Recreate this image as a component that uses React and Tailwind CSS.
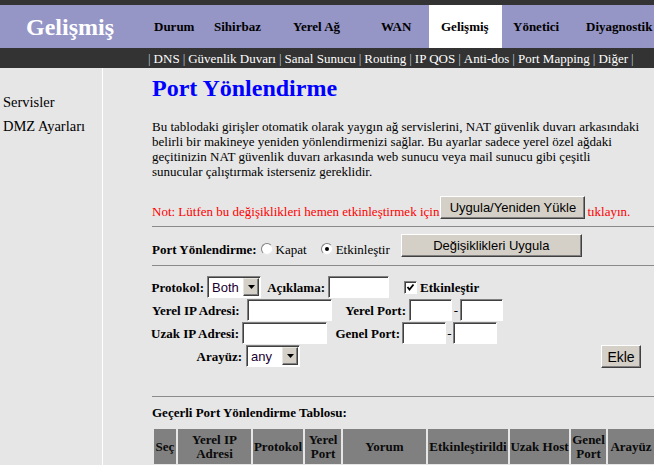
import React from 'react';

const serif = "font-['Liberation_Serif','Times_New_Roman',serif]";
const sans = "font-['Liberation_Sans',Arial,sans-serif]";

const navItems = [
  { label: 'Durum', w: 'w-[60px] pl-[12px]' },
  { label: 'Sihirbaz', w: 'w-[79px] pl-[12px]' },
  { label: 'Yerel Ağ', w: 'w-[88px] pl-[12px]' },
  { label: 'WAN', w: 'w-[60px] pl-[12px]' },
  { label: 'Gelişmiş', w: 'w-[73px] pl-[12px]', active: true },
  { label: 'Yönetici', w: 'w-[72px] pl-[11px]' },
  { label: 'Diyagnostik', w: 'w-[100px] pl-[12px]' },
];

const subItems = ['DNS', 'Güvenlik Duvarı', 'Sanal Sunucu', 'Routing', 'IP QOS', 'Anti-dos', 'Port Mapping', 'Diğer'];

const headers = [
  { t: ['Seç'], w: 'w-[22px]' },
  { t: ['Yerel IP', 'Adresi'], w: 'w-[73px]' },
  { t: ['Protokol'], w: 'w-[50px]' },
  { t: ['Yerel', 'Port'], w: 'w-[36px]' },
  { t: ['Yorum'], w: 'w-[83px]' },
  { t: ['Etkinleştirildi'], w: 'w-[80px]' },
  { t: ['Uzak Host'], w: 'w-[59px]' },
  { t: ['Genel', 'Port'], w: 'w-[35px]' },
  { t: ['Arayüz'], w: 'w-[46px]' },
];

const Btn = ({ children, className = '' }) => (
  <button
    className={`shrink-0 bg-[#d4d0c8] border border-t-white border-l-white border-b-[#404040] border-r-[#404040] shadow-[inset_-1px_-1px_0_#808080] ${sans} text-[13px] leading-none text-black ${className}`}
  >
    {children}
  </button>
);

const Field = ({ className = '' }) => (
  <input
    type="text"
    className={`shrink-0 h-[22px] bg-white border border-t-[#808080] border-l-[#808080] border-b-white border-r-white shadow-[inset_1px_1px_0_#404040] outline-none ${className}`}
  />
);

const Select = ({ value, className = '' }) => (
  <div
    className={`shrink-0 h-[22px] flex items-center bg-white border border-t-[#808080] border-l-[#808080] border-b-white border-r-white shadow-[inset_1px_1px_0_#404040] ${className}`}
  >
    <span className={`flex-1 pl-[4px] ${sans} text-[13px] leading-none text-[#1a0030]`}>{value}</span>
    <span className="mr-[1px] w-[16px] h-[18px] flex items-center justify-center bg-[#d4d0c8] border border-t-[#e8e6e0] border-l-[#e8e6e0] border-b-[#404040] border-r-[#404040] shadow-[inset_-1px_-1px_0_#808080]">
      <svg width="7" height="4" viewBox="0 0 7 4">
        <polygon points="0,0 7,0 3.5,4" fill="#000" />
      </svg>
    </span>
  </div>
);

// right-aligned label box, overflows to the left instead of wrapping
const Label = ({ children, className = '' }) => (
  <span className={`shrink-0 flex justify-end whitespace-nowrap text-[13px] leading-[15px] font-bold text-black ${className}`}>
    {children}
  </span>
);

const Radio = ({ checked }) => (
  <span className="w-[12px] h-[12px] rounded-full bg-white border border-t-[#808080] border-l-[#808080] border-b-[#e8e8e8] border-r-[#e8e8e8] flex items-center justify-center">
    {checked && <span className="w-[4px] h-[4px] rounded-full bg-black" />}
  </span>
);

const Hr = ({ className = '' }) => <div className={`h-px bg-[#8a8a8a] ${className}`} />;

export default function App() {
  return (
    <div className={`w-[654px] h-[465px] overflow-hidden bg-[#e6e6e6] ${serif}`}>
      <div className="h-[5px] bg-[#333333]" />

      <div className="h-[43px] bg-[#9595c6] flex overflow-hidden">
        <div className="w-[142px] shrink-0 flex items-center pl-[26px]">
          <span className="text-white font-bold text-[24px] leading-none">Gelişmiş</span>
        </div>
        {navItems.map((n) => (
          <div
            key={n.label}
            className={`shrink-0 flex items-center text-[13px] font-bold text-black whitespace-nowrap ${n.w} ${n.active ? 'bg-white' : ''}`}
          >
            {n.label}
          </div>
        ))}
      </div>

      <div className="h-[20px] bg-[#333333] flex items-center pl-[148px] text-[13px] leading-none text-white whitespace-nowrap overflow-hidden">
        {subItems.map((s) => (
          <React.Fragment key={s}>
            <span className="text-[#b8c4d8]">|</span>
            <span className="px-[3px]">{s}</span>
          </React.Fragment>
        ))}
        <span className="text-[#b8c4d8]">|</span>
      </div>

      <div className="flex h-[397px]">
        <aside className="w-[103px] shrink-0 border-r border-r-white pt-[22px] pl-[3px] text-[14.5px] leading-[24px] text-black">
          <div>Servisler</div>
          <div>DMZ Ayarları</div>
        </aside>

        <main className="flex-1 min-w-0 pl-[49px] text-black">
          <h1 className="mt-[6px] text-[24px] leading-[28px] font-bold text-[#0000ff]">Port Yönlendirme</h1>

          <p className="mt-[17px] text-[13px] leading-[15px] whitespace-nowrap">
            Bu tablodaki girişler otomatik olarak yaygın ağ servislerini, NAT güvenlik duvarı arkasındaki
            <br />
            belirli bir makineye yeniden yönlendirmenizi sağlar. Bu ayarlar sadece yerel özel ağdaki
            <br />
            geçitinizin NAT güvenlik duvarı arkasında web sunucu veya mail sunucu gibi çeşitli
            <br />
            sunucular çalıştırmak isterseniz gereklidir.
          </p>

          <div className="mt-[17px] flex items-end h-[23px] whitespace-nowrap text-[13px] leading-[15px] text-[#ff0000]">
            <span>Not: Lütfen bu değişiklikleri hemen etkinleştirmek için</span>
            <Btn className="ml-[1px] h-[23px] w-[145px]">Uygula/Yeniden Yükle</Btn>
            <span className="ml-[2px]">tıklayın.</span>
          </div>

          <Hr className="mt-[7px]" />

          <div className="mt-[7px] flex items-end h-[23px] whitespace-nowrap text-[13px] leading-[15px]">
            <Label>Port Yönlendirme:</Label>
            <span className="ml-[4px] mb-[2px]"><Radio /></span>
            <span className="ml-[3px]">Kapat</span>
            <span className="ml-[14px] mb-[2px]"><Radio checked /></span>
            <span className="ml-[3px]">Etkinleştir</span>
            <Btn className="ml-[11px] h-[23px] w-[181px]">Değişiklikleri Uygula</Btn>
          </div>

          <Hr className="mt-[8px]" />

          <div className="mt-[10px] flex flex-col gap-[1px]">
            <div className="flex items-end h-[22px]">
              <Label className="w-[55px] pr-[3px] mb-[3px]">Protokol:</Label>
              <Select value="Both" className="w-[54px]" />
              <Label className="w-[67px] pr-[3px] mb-[3px]">Açıklama:</Label>
              <Field className="w-[61px]" />
              <span className="shrink-0 ml-[15px] mb-[4px] w-[13px] h-[13px] bg-white border border-t-[#808080] border-l-[#808080] border-b-white border-r-white shadow-[inset_1px_1px_0_#404040] flex items-center justify-center">
                <svg width="9" height="9" viewBox="0 0 9 9">
                  <polyline points="1.5,4 3.5,6.5 7.5,1.5" fill="none" stroke="#000" strokeWidth="1.8" />
                </svg>
              </span>
              <Label className="ml-[3px] mb-[3px]">Etkinleştir</Label>
            </div>

            <div className="flex items-end h-[22px]">
              <Label className="w-[95px] !justify-start mb-[3px]">Yerel IP Adresi:</Label>
              <Field className="w-[85px]" />
              <Label className="w-[77px] pr-[3px] mb-[3px]">Yerel Port:</Label>
              <Field className="w-[43px]" />
              <span className="shrink-0 w-[8px] text-center text-[13px] leading-[15px] mb-[3px]">-</span>
              <Field className="w-[43px]" />
            </div>

            <div className="flex items-end h-[22px]">
              <Label className="w-[90px] pr-[3px] mb-[3px]">Uzak IP Adresi:</Label>
              <Field className="w-[85px]" />
              <Label className="w-[75px] pr-[2px] mb-[3px]">Genel Port:</Label>
              <Field className="w-[44px]" />
              <span className="shrink-0 w-[7px] text-center text-[13px] leading-[15px] mb-[3px]">-</span>
              <Field className="w-[44px]" />
            </div>

            <div className="flex items-end h-[23px]">
              <Label className="w-[94px] pr-[4px] mb-[4px]">Arayüz:</Label>
              <Select value="any" className="w-[54px] mb-[1px]" />
              <Btn className="ml-[301px] h-[23px] w-[40px] text-[14px]">Ekle</Btn>
            </div>
          </div>

          <Hr className="mt-[28px]" />

          <div className="mt-[8px] text-[13px] leading-[16px] font-bold whitespace-nowrap">Geçerli Port Yönlendirme Tablosu:</div>

          <div className="mt-[8px] ml-[2px] flex gap-[2px]">
            {headers.map((h) => (
              <div
                key={h.t.join(' ')}
                className={`shrink-0 h-[35px] bg-[#808080] flex flex-col items-center justify-center text-[13px] leading-[14px] font-bold text-[#0a0a0a] whitespace-nowrap ${h.w}`}
              >
                {h.t.map((l) => (
                  <span key={l}>{l}</span>
                ))}
              </div>
            ))}
          </div>
        </main>
      </div>
    </div>
  );
}
